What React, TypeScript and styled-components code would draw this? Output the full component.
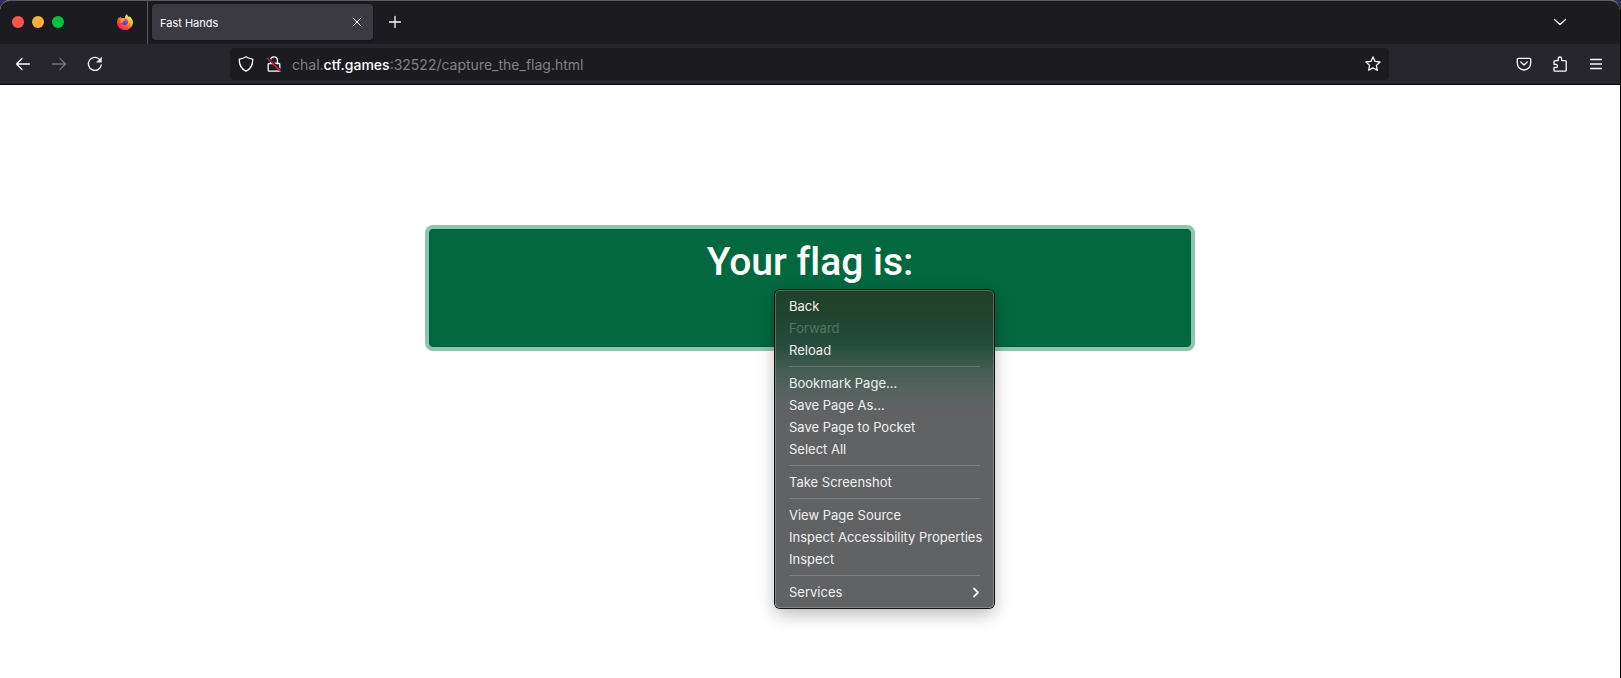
import React from "react";
import styled, { createGlobalStyle } from "styled-components";

const GlobalStyle = createGlobalStyle`
  * { box-sizing: border-box; }
  body {
    margin: 0;
    background: #2b2d5c;
    font-family: Inter, "Liberation Sans", sans-serif;
    -webkit-font-smoothing: antialiased;
  }
  button { font-family: inherit; }
`;

const Window = styled.div`
  display: flex;
  flex-direction: column;
  min-height: 100vh;
  background: #fff;
  border-right: 1px solid #000;
  border-radius: 10px 10px 0 0;
`;

const TabStrip = styled.header`
  display: flex;
  align-items: stretch;
  height: 44px;
  background: #1c1b20;
  border-top: 1px solid #5b5b5f;
  border-radius: 10px 10px 0 0;
  color: #fbfbfe;
`;

const WindowControls = styled.div`
  display: flex;
  align-items: center;
  gap: 8px;
  padding: 0 53px 2px 12px;
`;

const Light = styled.button<{ $color: string }>`
  width: 12px;
  height: 12px;
  padding: 0;
  border: 0;
  border-radius: 50%;
  background: ${(p) => p.$color};
`;

const PinnedTab = styled.a`
  display: flex;
  align-items: center;
  padding: 0 14px 2px 0;
  border-right: 1px solid #57575b;
`;

const Tab = styled.div`
  display: flex;
  align-items: center;
  justify-content: space-between;
  width: 221px;
  margin: 3px 8px 4px 4px;
  padding: 0 3px 0 8px;
  border-radius: 4px;
  background: #3b3a43;
  box-shadow: 0 0 3px rgba(0, 0, 0, 0.5);
  font-size: 11px;
  line-height: 16px;
`;

const TabTitle = styled.span`
  padding-top: 2px;
`;

const IconButton = styled.button<{ $width?: number; $dim?: boolean }>`
  display: flex;
  align-items: center;
  justify-content: center;
  width: ${(p) => p.$width ?? 32}px;
  height: 32px;
  padding: 0;
  border: 0;
  background: none;
  color: ${(p) => (p.$dim ? "#737277" : "#fbfbfe")};
`;

const StripAction = styled.div<{ $end?: boolean }>`
  display: flex;
  align-items: center;
  padding-right: ${(p) => (p.$end ? 44 : 0)}px;
  padding-bottom: 1px;
  margin-left: ${(p) => (p.$end ? "auto" : "0")};
`;

const Toolbar = styled.nav`
  display: flex;
  align-items: center;
  height: 41px;
  padding: 0 8px 0 7px;
  background: #27262c;
  border-bottom: 1px solid #0a0a0c;
`;

const NavButtons = styled.div`
  display: flex;
  gap: 4px;
  flex: 0 1 223px;
`;

const AddressBar = styled.form`
  display: flex;
  flex: 1 1 0;
  align-items: center;
  height: 32px;
  border-radius: 4px;
  background: #1c1b20;
`;

const AddressIcons = styled.div`
  display: flex;
  padding-left: 2px;
`;

const Address = styled.a`
  flex: 1;
  padding: 2px 0 0 4px;
  color: #828186;
  font-size: 14px;
  line-height: 20px;
  text-decoration: none;
`;

const Host = styled.span`
  color: #fbfbfe;
  font-weight: 500;
`;

const Actions = styled.div`
  display: flex;
  justify-content: flex-end;
  gap: 4px;
  flex: 0 1 223px;
`;

const Page = styled.main`
  flex: 1;
  padding: 144px 16px 60px;
`;

const FlagArea = styled.div`
  position: relative;
  max-width: 762px;
  margin: 0 auto;
`;

const FlagButton = styled.button`
  display: block;
  width: 100%;
  height: 118px;
  padding: 8px 16px 60px;
  border: 1px solid #005c3a;
  border-radius: 4px;
  background: #026840;
  box-shadow: 0 0 0 4px #8bc6ad;
  color: #fff;
`;

const FlagTitle = styled.span`
  display: block;
  font-family: Roboto, Inter, sans-serif;
  font-size: 39px;
  font-weight: 500;
  font-variant-ligatures: none;
  line-height: 48px;
`;

const Menu = styled.div`
  position: absolute;
  top: 61px;
  left: 346px;
  width: 219px;
  padding: 5px 14px;
  border-radius: 5px;
  background: linear-gradient(#1f412b 0, #20442f 24px, #234c3d 54px, #455c52 80px, #5a6362 106px, #616264 124px);
  box-shadow: inset 0 0 0 1px rgba(255, 255, 255, 0.22), 0 0 0 1px #101211,
    0 6px 18px rgba(0, 0, 0, 0.28);
`;

const MenuItem = styled.button`
  display: flex;
  align-items: center;
  justify-content: space-between;
  width: 100%;
  height: 22px;
  padding: 0;
  border: 0;
  background: none;
  color: #f0f0f0;
  font-size: 13px;
  font-weight: 400;
  line-height: 16px;
  white-space: nowrap;
  &:disabled { color: #557365; }
`;

const Divider = styled.hr`
  height: 1px;
  margin: 5px 0;
  border: 0;
  background: rgba(255, 255, 255, 0.18);
`;

type IconProps = { size?: number; children: React.ReactNode; weight?: number };
const Icon = ({ size = 16, weight = 1.3, children }: IconProps) => (
  <svg width={size} height={size} viewBox="0 0 16 16" fill="none" stroke="currentColor"
    strokeWidth={weight} strokeLinecap="round" strokeLinejoin="round" aria-hidden="true">
    {children}
  </svg>
);

const Firefox = () => (
  <svg width="16" height="16" viewBox="0 0 16 16" aria-hidden="true">
    <defs>
      <linearGradient id="flame" x1="0.85" y1="0.1" x2="0.2" y2="0.95">
        <stop offset="0" stopColor="#fff44f" />
        <stop offset="0.35" stopColor="#ffb02e" />
        <stop offset="0.6" stopColor="#ff5a36" />
        <stop offset="1" stopColor="#f5156c" />
      </linearGradient>
      <linearGradient id="globe" x1="0.7" y1="0" x2="0.3" y2="1">
        <stop offset="0" stopColor="#a455ee" />
        <stop offset="1" stopColor="#4b3dbb" />
      </linearGradient>
    </defs>
    <path fill="url(#flame)" d="M10 0c.2 1.4 1 2.2 2 3l.4-.8c2.1 1.5 3.4 3.5 3.500 6C16 12.800 12.400 16 8 16S0 12.600 0 8.400C0 6.400.7 4.700 1.700 3.500l.2 1.100C2.500 3.500 3 3 3.500 2.500c0 .8.2 1.300.7 1.700C5.500 3.800 7 3.900 8 4.500 7.700 3 8.500 1 10 0Z" />
    <circle cx="8" cy="8" r="3" fill="url(#globe)" />
    <path fill="#ff9a2c" d="M3.400 5.300c1.700-.9 3.800-.6 4.800.6-.4.800-1.300.9-2 1.200-.9.500-.4 1.600-1.100 2.200C4 8.600 3.200 7 3.400 5.300Z" />
  </svg>
);

const MENU: { label: string; disabled?: boolean; submenu?: boolean }[][] = [
  [{ label: "Back" }, { label: "Forward", disabled: true }, { label: "Reload" }],
  [{ label: "Bookmark Page…" }, { label: "Save Page As…" }, { label: "Save Page to Pocket" }, { label: "Select All" }],
  [{ label: "Take Screenshot" }],
  [{ label: "View Page Source" }, { label: "Inspect Accessibility Properties" }, { label: "Inspect" }],
  [{ label: "Services", submenu: true }],
];

export default function App() {
  return (
    <>
      <GlobalStyle />
      <Window>
        <TabStrip>
          <WindowControls>
            <Light $color="#ff544d" aria-label="Close window" />
            <Light $color="#ffb039" aria-label="Minimize window" />
            <Light $color="#00c33d" aria-label="Zoom window" />
          </WindowControls>
          <PinnedTab href="#" aria-label="Firefox View"><Firefox /></PinnedTab>
          <Tab>
            <TabTitle>Fast Hands</TabTitle>
            <IconButton $width={26} aria-label="Close tab">
              <Icon weight={1}><path d="m4 4 8 8M12 4l-8 8" /></Icon>
            </IconButton>
          </Tab>
          <StripAction>
            <IconButton $width={28} aria-label="New tab">
              <Icon><path d="M8 2.500v11M2.500 8h11" /></Icon>
            </IconButton>
          </StripAction>
          <StripAction $end>
            <IconButton aria-label="List all tabs">
              <Icon><path d="m2.500 5.500 5.500 5 5.500-5" /></Icon>
            </IconButton>
          </StripAction>
        </TabStrip>
        <Toolbar>
          <NavButtons>
            <IconButton aria-label="Back"><Icon><path d="M14.500 8h-13M7 2.500 1.500 8 7 13.500" /></Icon></IconButton>
            <IconButton $dim disabled aria-label="Forward"><Icon><path d="M1.500 8h13M9 2.500 14.500 8 9 13.500" /></Icon></IconButton>
            <IconButton aria-label="Reload">
              <Icon>
                <path d="M14.300 9A6.500 6.500 0 1 1 12.600 3.400" />
                <path d="M14.500 1.500v4.700H9.800Z" fill="currentColor" strokeWidth="0.5" />
              </Icon>
            </IconButton>
          </NavButtons>
          <AddressBar>
            <AddressIcons>
              <IconButton $width={28} type="button" aria-label="Tracking protection">
                <Icon><path d="M8 .8c1.800 1.300 4 2 6.700 2.300.2 5.200-1.700 9.700-6.700 12.100C3 12.800 1.100 8.300 1.300 3.100 4 2.800 6.200 2.100 8 .8Z" /></Icon>
              </IconButton>
              <IconButton $width={28} type="button" aria-label="Connection not secure">
                <Icon>
                  <path d="M4.600 7.500V4.300a3.400 3.400 0 0 1 6.800 0v3.200M3.200 7.500h9.600a1 1 0 0 1 1 1v5.700a1 1 0 0 1-1 1H3.200a1 1 0 0 1-1-1V8.500a1 1 0 0 1 1-1Z" />
                  <path d="M2.200 1.800 14.800 14" stroke="#1c1b20" strokeWidth="1.5" />
                  <path d="m1.300 2.300 13.200 12.900" stroke="#f0143c" />
                </Icon>
              </IconButton>
            </AddressIcons>
            <Address href="#">chal.<Host>ctf.games</Host>:32522/capture_the_flag.html</Address>
            <IconButton type="button" aria-label="Bookmark this page">
              <Icon><path d="m8 .9 2.100 4.500 4.900.6-3.600 3.400.9 4.900L8 11.900l-4.300 2.400.9-4.900L1 6l4.900-.6Z" /></Icon>
            </IconButton>
          </AddressBar>
          <Actions>
            <IconButton aria-label="Save to Pocket">
              <Icon>
                <path d="M2.500 2.300h11a1.200 1.200 0 0 1 1.200 1.200v3.800a6.700 6.700 0 0 1-13.400 0V3.500a1.200 1.200 0 0 1 1.200-1.200Z" />
                <path d="M4.800 6 8 9l3.200-3" />
              </Icon>
            </IconButton>
            <IconButton aria-label="Extensions">
              <Icon><path d="M2 7.500V5.600a1 1 0 0 1 1-1h3.200V2.700a1.700 1.700 0 0 1 3.400 0v1.900h3.600a1 1 0 0 1 1 1v8.600a1 1 0 0 1-1 1H3a1 1 0 0 1-1-1v-2.700h1.800a1.600 1.600 0 0 0 0-3.200H2Z" /></Icon>
            </IconButton>
            <IconButton aria-label="Open application menu">
              <Icon><path d="M2.500 3.500h11M2.500 8h11M2.500 12.500h11" /></Icon>
            </IconButton>
          </Actions>
        </Toolbar>
        <Page>
          <FlagArea>
            <FlagButton><FlagTitle>Your flag is:</FlagTitle></FlagButton>
            <Menu role="menu">
              {MENU.map((group, i) => (
                <React.Fragment key={i}>
                  {i > 0 && <Divider />}
                  {group.map((item) => (
                    <MenuItem key={item.label} role="menuitem" disabled={item.disabled}>
                      {item.label}
                      {item.submenu && (
                        <svg width="7" height="11" viewBox="0 0 7 11" fill="none" stroke="currentColor" strokeWidth="1.8" strokeLinecap="round" strokeLinejoin="round" aria-hidden="true">
                          <path d="m1 1.500 4 4-4 4" />
                        </svg>
                      )}
                    </MenuItem>
                  ))}
                </React.Fragment>
              ))}
            </Menu>
          </FlagArea>
        </Page>
      </Window>
    </>
  );
}
